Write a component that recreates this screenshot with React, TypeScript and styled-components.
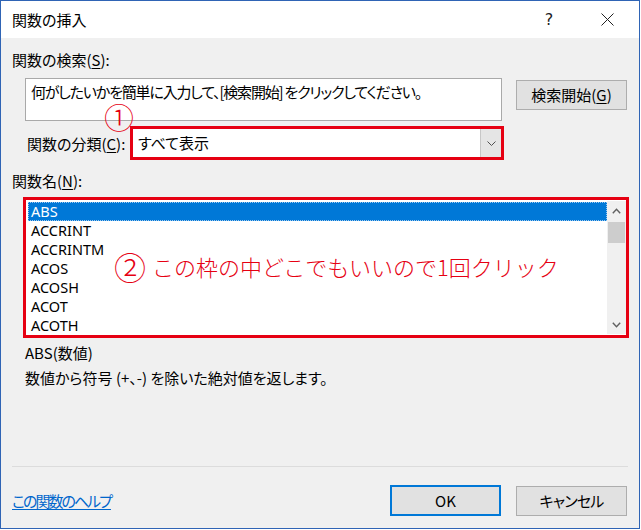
import React from "react";
import styled, { createGlobalStyle } from "styled-components";

const Global = createGlobalStyle`
  html, body { margin: 0; padding: 0; background: #ffffff; }
  body { font-family: "Noto Sans CJK JP", "Noto Sans", sans-serif; }
`;

const JP = `"Noto Sans CJK JP", "Noto Sans", sans-serif`;
const LATIN = `"Noto Sans", "Noto Sans CJK JP", sans-serif`;
const RED = "#e60012";

const Window = styled.div`
  box-sizing: border-box;
  width: 640px;
  height: 529px;
  border: 1px solid #2f64b5;
  background: #f0f0f0;
  display: flex;
  flex-direction: column;
  font-family: ${JP};
  font-feature-settings: "palt";
  font-size: 15px;
  color: #000;
`;

const TitleBar = styled.div`
  height: 37px;
  flex: none;
  background: #ffffff;
  display: flex;
  align-items: center;
  padding: 0 9px 0 11px;
`;

const Title = styled.div`
  flex: 1;
  font-size: 15px;
  line-height: 20px;
`;

const TitleButtons = styled.div`
  display: flex;
  gap: 12px;
`;

const TitleButton = styled.div`
  width: 46px;
  height: 30px;
  display: flex;
  align-items: center;
  justify-content: center;
  font-family: "DejaVu Sans", ${LATIN};
  font-size: 16px;
  color: #222;
`;

const Body = styled.div`
  flex: 1;
  display: flex;
  flex-direction: column;
  padding: 0 11px;
`;

const Label = styled.div<{ $top: number; $indent?: number }>`
  margin-top: ${(p) => p.$top}px;
  padding-left: ${(p) => p.$indent ?? 0}px;
  line-height: 20px;
  height: 20px;
  white-space: nowrap;
  u { text-decoration: underline; text-underline-offset: 2px; }
`;

const SearchRow = styled.div`
  margin-top: 8px;
  padding-left: 13px;
  display: flex;
  align-items: flex-start;
  gap: 14px;
`;

const SearchBox = styled.div`
  box-sizing: border-box;
  width: 477px;
  height: 43px;
  background: #ffffff;
  border: 1px solid #a9a9a9;
  padding: 3px 5px;
  line-height: 20px;
  letter-spacing: -1.2px;
  white-space: nowrap;
  overflow: hidden;
`;

const Button = styled.div<{ $primary?: boolean }>`
  box-sizing: border-box;
  width: 111px;
  height: ${(p) => (p.$primary ? 31 : 30)}px;
  background: #e1e1e1;
  border: ${(p) => (p.$primary ? "2px solid #0078d7" : "1px solid #adadad")};
  display: flex;
  align-items: center;
  justify-content: center;
  line-height: 20px;
  white-space: nowrap;
  letter-spacing: ${(p) => (p.$primary ? 0 : -0.8)}px;
  u { text-decoration: underline; text-underline-offset: 2px; }
`;

const SearchButton = styled(Button)`
  margin-top: 2px;
  letter-spacing: 0;
`;

const CategoryRow = styled.div`
  position: relative;
  margin-top: 5px;
  display: flex;
  align-items: center;
`;

const CategoryLabel = styled.div`
  box-sizing: border-box;
  width: 118px;
  padding-left: 15px;
  padding-top: 1px;
  line-height: 20px;
  white-space: nowrap;
  u { text-decoration: underline; text-underline-offset: 2px; }
`;

const Marker = styled.div`
  position: absolute;
  left: 92px;
  top: -25px;
  color: ${RED};
  font-family: ${JP};
  font-feature-settings: normal;
  font-size: 30px;
  font-weight: 300;
  line-height: 1;
`;

const ComboFrame = styled.div`
  box-sizing: border-box;
  width: 374px;
  height: 34px;
  border: 3px solid ${RED};
  display: flex;
  background: #ffffff;
`;

const ComboText = styled.div`
  flex: 1;
  padding-left: 5px;
  display: flex;
  align-items: center;
  line-height: 20px;
`;

const DropButton = styled.div`
  width: 20px;
  background: #e5e5e5;
  border-left: 1px solid #c7c7c7;
  display: flex;
  align-items: center;
  justify-content: center;
`;

const ListFrame = styled.div`
  position: relative;
  box-sizing: border-box;
  margin: 6px 0 0 11px;
  width: 606px;
  height: 141px;
  border: 3px solid ${RED};
  background: #ffffff;
  display: flex;
  padding: 1px 0 1px 1px;
`;

const Items = styled.div`
  flex: 1;
  padding: 1px 0 0 1px;
  overflow: hidden;
`;

const Item = styled.div<{ $selected?: boolean }>`
  box-sizing: border-box;
  height: 19px;
  line-height: 18px;
  padding-left: 3px;
  font-family: ${LATIN};
  font-size: 14.5px;
  color: ${(p) => (p.$selected ? "#ffffff" : "#000000")};
  background: ${(p) => (p.$selected ? "#0078d7" : "transparent")};
  outline: ${(p) => (p.$selected ? "1px dotted #9cc8f0" : "none")};
  outline-offset: -1px;
`;

const ScrollBar = styled.div`
  width: 19px;
  background: #f0f0f0;
  display: flex;
  flex-direction: column;
  align-items: stretch;
`;

const ScrollArrow = styled.div`
  height: 19px;
  display: flex;
  align-items: center;
  justify-content: center;
`;

const Thumb = styled.div`
  margin: 2px 1px 0;
  height: 21px;
  background: #cdcdcd;
`;

const Track = styled.div`
  flex: 1;
`;

const Overlay = styled.div`
  position: absolute;
  left: 88px;
  top: 50px;
  display: flex;
  align-items: center;
  gap: 6px;
  color: ${RED};
  font-size: 22px;
  font-weight: 300;
  font-feature-settings: normal;
  line-height: 32px;
  white-space: nowrap;
`;

const Circled = styled.span`
  font-size: 32px;
  line-height: 32px;
`;

const Desc = styled.div<{ $top: number }>`
  margin-top: ${(p) => p.$top}px;
  padding-left: 13px;
  line-height: 20px;
  white-space: nowrap;
`;

const Spacer = styled.div`
  flex: 1;
`;

const Separator = styled.div`
  height: 1px;
  background: #dcdcdc;
`;

const Footer = styled.div`
  display: flex;
  align-items: center;
  padding: 18px 1px 12px 0;
  gap: 15px;
`;

const HelpLink = styled.a`
  flex: 1;
  color: #0066cc;
  text-decoration: underline;
  text-underline-offset: 2px;
  line-height: 20px;
  letter-spacing: -2px;
  cursor: pointer;
`;

const Chevron = ({ up }: { up?: boolean }) => (
  <svg width="9" height="6" viewBox="0 0 9 6">
    <path
      d={up ? "M0.8 5.2 L4.5 1.2 L8.2 5.2" : "M0.8 0.8 L4.5 4.8 L8.2 0.8"}
      fill="none"
      stroke="#606060"
      strokeWidth="1.4"
    />
  </svg>
);

const SmallChevron = () => (
  <svg width="9" height="5" viewBox="0 0 9 5">
    <path d="M0.5 0.5 L4.5 4.5 L8.5 0.5" fill="none" stroke="#505050" strokeWidth="1" />
  </svg>
);

const CloseIcon = () => (
  <svg width="13" height="13" viewBox="0 0 13 13">
    <path d="M0.5 0.5 L12.5 12.5 M12.5 0.5 L0.5 12.5" stroke="#222" strokeWidth="1" />
  </svg>
);

const functions = ["ABS", "ACCRINT", "ACCRINTM", "ACOS", "ACOSH", "ACOT", "ACOTH"];

export default function App() {
  return (
    <>
      <Global />
      <Window>
        <TitleBar>
          <Title>関数の挿入</Title>
          <TitleButtons>
            <TitleButton>?</TitleButton>
            <TitleButton>
              <CloseIcon />
            </TitleButton>
          </TitleButtons>
        </TitleBar>
        <Body>
          <Label $top={12}>
            関数の検索(<u>S</u>):
          </Label>
          <SearchRow>
            <SearchBox>何がしたいかを簡単に入力して、[検索開始] をクリックしてください。</SearchBox>
            <SearchButton>
              検索開始(<u>G</u>)
            </SearchButton>
          </SearchRow>
          <CategoryRow>
            <Marker>①</Marker>
            <CategoryLabel>
              関数の分類(<u>C</u>):
            </CategoryLabel>
            <ComboFrame>
              <ComboText>すべて表示</ComboText>
              <DropButton>
                <SmallChevron />
              </DropButton>
            </ComboFrame>
          </CategoryRow>
          <Label $top={11}>
            関数名(<u>N</u>):
          </Label>
          <ListFrame>
            <Items>
              {functions.map((f, i) => (
                <Item key={f} $selected={i === 0}>
                  {f}
                </Item>
              ))}
            </Items>
            <ScrollBar>
              <ScrollArrow>
                <Chevron up />
              </ScrollArrow>
              <Thumb />
              <Track />
              <ScrollArrow>
                <Chevron />
              </ScrollArrow>
            </ScrollBar>
            <Overlay>
              <Circled>②</Circled>
              <span>この枠の中どこでもいいので1回クリック</span>
            </Overlay>
          </ListFrame>
          <Desc $top={5}>ABS(数値)</Desc>
          <Desc $top={5}>数値から符号 (+、-) を除いた絶対値を返します。</Desc>
          <Spacer />
          <Separator />
          <Footer>
            <HelpLink>この関数のヘルプ</HelpLink>
            <Button $primary>OK</Button>
            <Button>キャンセル</Button>
          </Footer>
        </Body>
      </Window>
    </>
  );
}
